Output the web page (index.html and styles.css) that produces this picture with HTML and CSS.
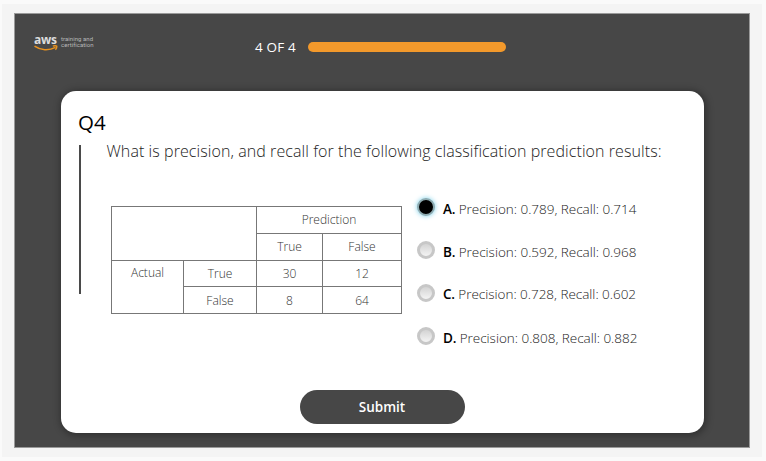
FILE: index.html
```html
<!DOCTYPE html>
<html lang="en">
<head>
<meta charset="utf-8">
<title>Knowledge check</title>
<link rel="stylesheet" href="styles.css">
</head>
<body>
<div class="frame">
  <main class="stage">
    <header class="top">
      <div class="logo">
        <div class="mark"><span class="aws">aws</span>
          <svg class="smile" width="24" height="7" viewBox="0 0 24 7" fill="none" stroke="#e8921f" stroke-width="1.5"><path d="M.5 1.2C6.500 5.400 15 5.800 21.500 2.300"/><path d="M18.800 1.100C20.500.6 22 .7 22.700 1.100C22.900 2.300 22.300 3.700 21.400 4.700"/></svg>
        </div>
        <div class="tagline"><div>training and</div><div>certification</div></div>
      </div>
      <div class="progress"><span class="count">4 OF 4</span><div class="bar"></div></div>
    </header>
    <section class="card">
      <h1>Q4</h1>
      <div class="question">
        <p class="prompt"><span>What is precision, and recall for the following classification prediction results:</span></p>
        <div class="content">
          <table>
            <colgroup><col class="c1"><col class="c2"><col class="c3"><col class="c4"></colgroup>
            <tr><td colspan="2" rowspan="2"></td><td colspan="2">Prediction</td></tr>
            <tr><td>True</td><td>False</td></tr>
            <tr><td rowspan="2" class="actual">Actual</td><td>True</td><td>30</td><td>12</td></tr>
            <tr><td>False</td><td>8</td><td>64</td></tr>
          </table>
          <div class="answers">
            <label><i class="radio on"></i><span class="text"><b>A.</b> Precision: 0.789, Recall: 0.714</span></label>
            <label><i class="radio"></i><span class="text"><b>B.</b> Precision: 0.592, Recall: 0.968</span></label>
            <label class="third"><i class="radio"></i><span class="text"><b>C.</b> Precision: 0.728, Recall: 0.602</span></label>
            <label class="fourth"><i class="radio"></i><span class="text"><b>D.</b> Precision: 0.808, Recall: 0.882</span></label>
          </div>
        </div>
      </div>
      <button>Submit</button>
    </section>
  </main>
</div>
</body>
</html>
```
FILE: styles.css
```css
* { box-sizing: border-box; }
body {
  margin: 0;
  height: 461px;
  padding: 4px 4px 4px 2px;
  background: #fafafa;
  font-family: "Open Sans", "Noto Sans", sans-serif;
  overflow: hidden;
}
.frame { height: 453px; padding: 9px 12px; background: #f4f4f4; }
.stage {
  width: 736px;
  height: 435px;
  border: 1px solid #9a9a9a;
  background: #474747;
}
.top { display: flex; height: 77px; padding: 20px 0 0 19px; }
.logo { display: flex; width: 221px; color: #ddd; }
.mark { width: 27px; display: flex; flex-direction: column; }
.aws { height: 11px; font-size: 12px; line-height: 11px; font-weight: 700; letter-spacing: -.3px; }
.smile { display: block; }
.tagline { padding-top: 2px; font-family: Roboto, sans-serif; font-size: 6px; line-height: 6px; letter-spacing: .05px; color: #b8b8b8; white-space: nowrap; }
.progress { display: flex; height: 26px; align-items: center; color: #fff; }
.count { width: 53px; font-size: 13.500px; line-height: 20px; letter-spacing: .15px; white-space: nowrap; }
.bar { width: 198px; height: 10px; border-radius: 5px; background: #f3992b; }
.card {
  display: flex;
  flex-direction: column;
  width: 643px;
  height: 342px;
  margin-left: 45.500px;
  padding: 17px 0 0 18px;
  border-radius: 15px;
  background: #fff;
  box-shadow: 1px 1px 7px 2px rgba(0, 0, 0, .3);
}
h1 { margin: 0 0 0 -.5px; height: 37px; font-size: 20.500px; line-height: 28px; font-weight: 400; }
.question { height: 149px; border-left: 2px solid #4a4a4a; padding-left: 26px; }
.prompt { margin: -2px 0 0; height: 51px; font-size: 16px; line-height: 16px; letter-spacing: .08px; font-weight: 300; color: #232323; white-space: nowrap; }
.content { display: flex; }
table {
  width: 291px;
  height: 108px;
  margin: 12px 0 0 4.500px;
  table-layout: fixed;
  border-collapse: collapse;
  font-size: 12px;
  line-height: 16px;
  font-weight: 300;
  color: #333;
}
td { height: 26.5px; padding: 1px 0 0; border: 1px solid #777; text-align: center; }
.actual { vertical-align: top; padding-top: 4px; }
.c1 { width: 72px; } .c2 { width: 73px; } .c3 { width: 66px; } .c4 { width: 79px; }
.answers { margin-left: 15px; }
.answers label { display: flex; height: 43.3px; }
.radio {
  width: 18px;
  height: 18px;
  margin-top: 4px;
  border: 3px solid #c7c7c7;
  border-radius: 50%;
  background: linear-gradient(#d3d3d3, #f4f4f4);
}
.radio.on { border-width: 2px; border-color: #8eabb1; background: #000; box-shadow: 0 0 5px #77cfe8; }
.text { margin-left: 8px; padding-top: 6px; font-size: 13.500px; line-height: 18px; letter-spacing: -.02px; font-weight: 300; color: #222; white-space: nowrap; }
.third .text { padding-top: 4px; }
.fourth .text { padding-top: 5px; }
.third .radio, .fourth .radio { margin-top: 3px; }
.text b { font-weight: 600; color: #000; letter-spacing: -.2px; }
button {
  width: 165px;
  height: 34px;
  margin: 96px 0 0 221px;
  border: 0;
  border-radius: 17px;
  background: #474747;
  color: #fff;
  font: 600 13.500px/20px "Open Sans", sans-serif;
}
```
